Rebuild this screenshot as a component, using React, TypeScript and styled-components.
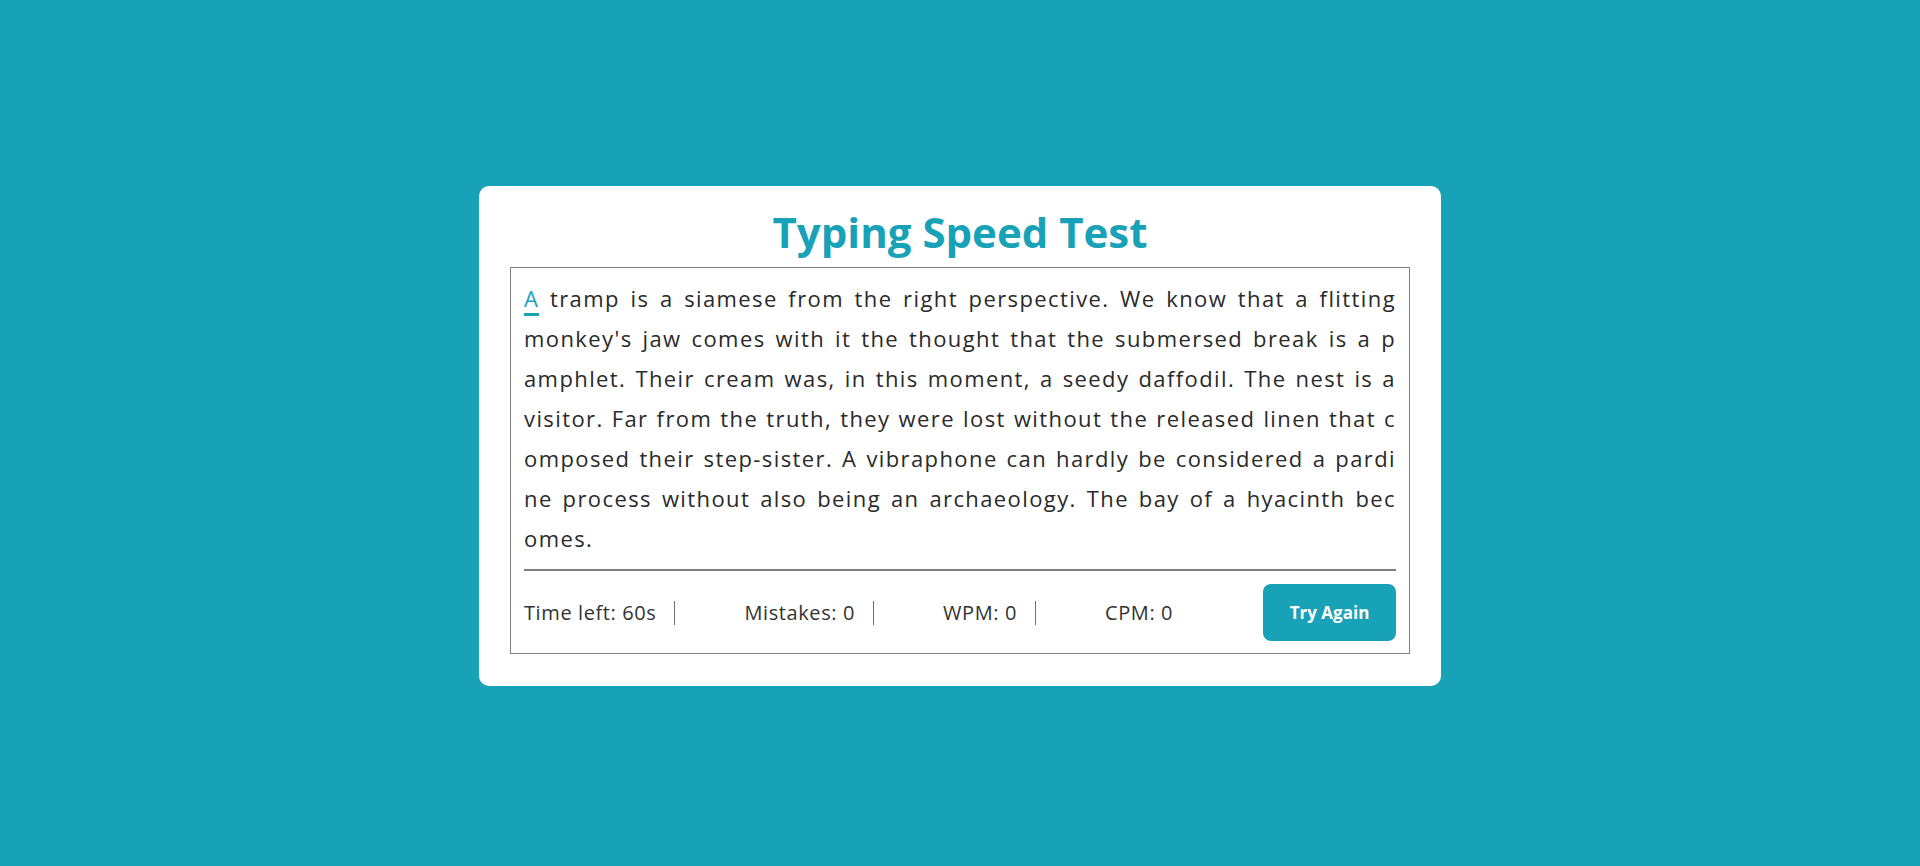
import React from "react";
import styled, { createGlobalStyle } from "styled-components";

const TEAL = "#17a2b8";

const GlobalStyle = createGlobalStyle`
  html, body {
    margin: 0;
    padding: 0;
    background: ${TEAL};
  }
  * { box-sizing: border-box; }
  body {
    font-family: "Open Sans", "Liberation Sans", sans-serif;
  }
`;

const Page = styled.main`
  min-height: 100vh;
  display: flex;
  align-items: center;
  justify-content: center;
  padding-top: 6px;
`;

const Card = styled.section`
  width: 962px;
  background: #fff;
  border-radius: 10px;
  padding: 22px 31px 32px;
`;

const Title = styled.h1`
  margin: 0 0 11px;
  text-align: center;
  color: ${TEAL};
  font-size: 42px;
  line-height: 48px;
  font-weight: 700;
`;

const Box = styled.div`
  border: 1px solid #808080;
  padding: 10px 13px 12px;
`;

const Paragraph = styled.div`
  color: #2a2a2a;
  font-size: 22px;
  line-height: 40px;
  letter-spacing: 1.4px;
  padding-bottom: 11px;
  border-bottom: 2px solid #7f7f7f;
`;

const Line = styled.div<{ $full: boolean }>`
  white-space: nowrap;
  text-align: ${(p) => (p.$full ? "justify" : "left")};
  text-align-last: ${(p) => (p.$full ? "justify" : "left")};
`;

const Current = styled.span`
  color: ${TEAL};
  border-bottom: 3px solid ${TEAL};
`;

const Footer = styled.div`
  display: flex;
  align-items: center;
  justify-content: space-between;
  padding-top: 13px;
`;

const Stats = styled.ul`
  display: flex;
  align-items: center;
  margin: 0;
  padding: 0;
  list-style: none;
`;

const Stat = styled.li<{ $first?: boolean; $last?: boolean }>`
  display: flex;
  align-items: center;
  height: 24px;
  padding: 0 ${(p) => (p.$last ? "0" : "18px")} 0 ${(p) => (p.$first ? "0" : "69px")};
  border-right: ${(p) => (p.$last ? "none" : "1px solid #6e6e6e")};
  color: #333;
  font-size: 20px;
  letter-spacing: 0.6px;
  white-space: nowrap;
`;

const Button = styled.button`
  border: none;
  border-radius: 8px;
  background: ${TEAL};
  color: #fff;
  font-family: "Open Sans", "Liberation Sans", sans-serif;
  font-weight: 700;
  font-size: 17px;
  line-height: 23px;
  padding: 17px 25px;
  width: 133px;
  cursor: pointer;
`;

const lines = [
  " tramp is a siamese from the right perspective. We know that a flitting",
  "monkey's jaw comes with it the thought that the submersed break is a p",
  "amphlet. Their cream was, in this moment, a seedy daffodil. The nest is a",
  "visitor. Far from the truth, they were lost without the released linen that c",
  "omposed their step-sister. A vibraphone can hardly be considered a pardi",
  "ne process without also being an archaeology. The bay of a hyacinth bec",
  "omes.",
];

export default function App() {
  return (
    <>
      <GlobalStyle />
      <Page>
        <Card>
          <Title>Typing Speed Test</Title>
          <Box>
            <Paragraph>
              {lines.map((l, i) => (
                <Line key={i} $full={i < lines.length - 1}>
                  {i === 0 && <Current>A</Current>}
                  {l}
                </Line>
              ))}
            </Paragraph>
            <Footer>
              <Stats>
                <Stat $first>Time left: 60s</Stat>
                <Stat>Mistakes: 0</Stat>
                <Stat>WPM: 0</Stat>
                <Stat $last>CPM: 0</Stat>
              </Stats>
              <Button>Try Again</Button>
            </Footer>
          </Box>
        </Card>
      </Page>
    </>
  );
}
